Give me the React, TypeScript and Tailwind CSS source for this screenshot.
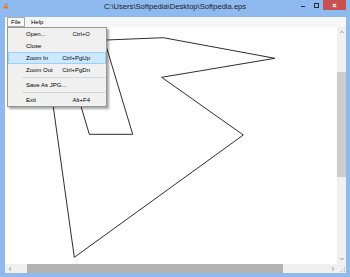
import { ChevronUp, ChevronDown, ChevronLeft, ChevronRight } from 'lucide-react';

const font = { fontFamily: '"Liberation Sans", Arial, sans-serif' };

interface MenuItem {
  label: string;
  shortcut?: string;
  active?: boolean;
}

const topItems: MenuItem[] = [
  { label: 'Open...', shortcut: 'Ctrl+O' },
  { label: 'Close' },
  { label: 'Zoom In', shortcut: 'Ctrl+PgUp', active: true },
  { label: 'Zoom Out', shortcut: 'Ctrl+PgDn' },
];

function Item({ label, shortcut, active }: MenuItem) {
  return (
    <div
      className={`h-[12px] flex items-center text-[6px] leading-none text-black ${
        active ? 'bg-[#cce8ff] border border-[#99d1ff] pl-[17px] pr-[15px]' : 'pl-[18px] pr-[16px]'
      }`}
    >
      <span className="flex-1">{label}</span>
      {shortcut && <span>{shortcut}</span>}
    </div>
  );
}

function Separator() {
  return (
    <div className="h-[3px] flex items-center pl-[14px]">
      <div className="h-px w-full bg-[#d7d7d7]"></div>
    </div>
  );
}

export default function App() {
  return (
    <div className="w-[350px] h-[277px] bg-[#8fbaf0] flex flex-col overflow-hidden" style={font}>
      {/* Title bar */}
      <div className="h-[17px] grid grid-cols-[1fr_auto_1fr] shrink-0">
        <div className="flex items-start">
          <svg className="ml-[3px] mt-[3px]" width="6" height="6" viewBox="0 0 6 6">
            <path d="M0.5 3 H5 V4.5 Q5 5.8 3.5 5.8 H2 Q0.5 5.8 0.5 4.5 Z" fill="#e8812a" />
            <path d="M2 0.5 Q3 1.5 2 2.5 M3.5 0.3 Q4.5 1.3 3.5 2.4" stroke="#d9572b" strokeWidth="0.7" fill="none" />
          </svg>
        </div>
        <div className="pt-[3px] text-[7.6px] leading-[8px] text-[#1a1a1a] whitespace-nowrap">
          C:\Users\Softpedia\Desktop\Softpedia.eps
        </div>
        <div className="flex justify-end items-start pr-[4px]">
          <div className="mt-[6px] w-[4px] h-px bg-[#2b2b2b] mr-[9px]"></div>
          <div className="mt-[3px] w-[5px] h-[5px] border border-[#2b2b2b] border-t-[1.5px] mr-[4px]"></div>
          <div className="w-[23px] h-[10px] bg-[#c75050] flex items-center justify-center">
            <svg width="5" height="5" viewBox="0 0 5 5">
              <path d="M0.8 0.8 L4.2 4.2 M4.2 0.8 L0.8 4.2" stroke="#fff" strokeWidth="1.1" />
            </svg>
          </div>
        </div>
      </div>

      {/* Client area */}
      <div className="flex-1 ml-[5px] mr-[4px] mb-[4px] flex flex-col bg-white relative">
        {/* Menu bar */}
        <div className="h-[10px] bg-[#f5f6f7] flex items-stretch text-[6px] leading-none text-black">
          <div className="ml-[2px] w-[18px] border border-[#a8a8a8] bg-[#f7f7f7] flex items-center pl-[3px]">File</div>
          <div className="ml-[6px] flex items-center">Help</div>
        </div>

        {/* Canvas + scrollbars */}
        <div className="flex-1 grid grid-cols-[1fr_9px] grid-rows-[1fr_9px]">
          <div className="relative overflow-hidden">
            <svg className="absolute inset-0 w-full h-full" viewBox="5 27 332 237" preserveAspectRatio="none">
              <polygon
                points="44.3,42.5 163.3,37.7 275,58.3 161.7,77.3 243.3,135 74.3,257.3"
                fill="none"
                stroke="#2e2e2e"
                strokeWidth="1"
              />
              <polyline
                points="62,42 89.3,134.3 132.7,134.3 105.5,44"
                fill="none"
                stroke="#2e2e2e"
                strokeWidth="1"
              />
            </svg>
          </div>

          {/* Vertical scrollbar */}
          <div className="bg-[#f0f0f0] flex flex-col">
            <div className="h-[10px] flex items-center justify-center text-[#606060]">
              <ChevronUp size={6} strokeWidth={2.5} />
            </div>
            <div className="h-[35px]"></div>
            <div className="h-[105px] bg-[#cdcdcd]"></div>
            <div className="flex-1"></div>
            <div className="h-[10px] flex items-center justify-center text-[#606060]">
              <ChevronDown size={6} strokeWidth={2.5} />
            </div>
          </div>

          {/* Horizontal scrollbar */}
          <div className="bg-[#f0f0f0] flex">
            <div className="w-[9px] flex items-center justify-center text-[#606060]">
              <ChevronLeft size={6} strokeWidth={2.5} />
            </div>
            <div className="w-[13px]"></div>
            <div className="w-[256px] bg-[#b3b3b3]"></div>
            <div className="flex-1"></div>
            <div className="w-[9px] flex items-center justify-center text-[#606060]">
              <ChevronRight size={6} strokeWidth={2.5} />
            </div>
          </div>

          {/* Size grip */}
          <div className="bg-[#f0f0f0] flex items-end justify-end p-[1px]">
            <svg width="5" height="5" viewBox="0 0 5 5">
              <rect x="4" y="0" width="1" height="1" fill="#b8b8b8" />
              <rect x="2" y="2" width="1" height="1" fill="#b8b8b8" />
              <rect x="4" y="2" width="1" height="1" fill="#b8b8b8" />
              <rect x="0" y="4" width="1" height="1" fill="#b8b8b8" />
              <rect x="2" y="4" width="1" height="1" fill="#b8b8b8" />
              <rect x="4" y="4" width="1" height="1" fill="#b8b8b8" />
            </svg>
          </div>
        </div>

        {/* Open File menu */}
        <div className="absolute left-[2px] top-[10px] w-[100px] bg-[#f0f0f0] border border-[#979797] shadow-[2px_2px_2px_rgba(0,0,0,0.35)]">
          {topItems.map((item) => (
            <Item key={item.label} {...item} />
          ))}
          <Separator />
          <Item label="Save As JPG..." />
          <Separator />
          <Item label="Exit" shortcut="Alt+F4" />
        </div>
      </div>
    </div>
  );
}
